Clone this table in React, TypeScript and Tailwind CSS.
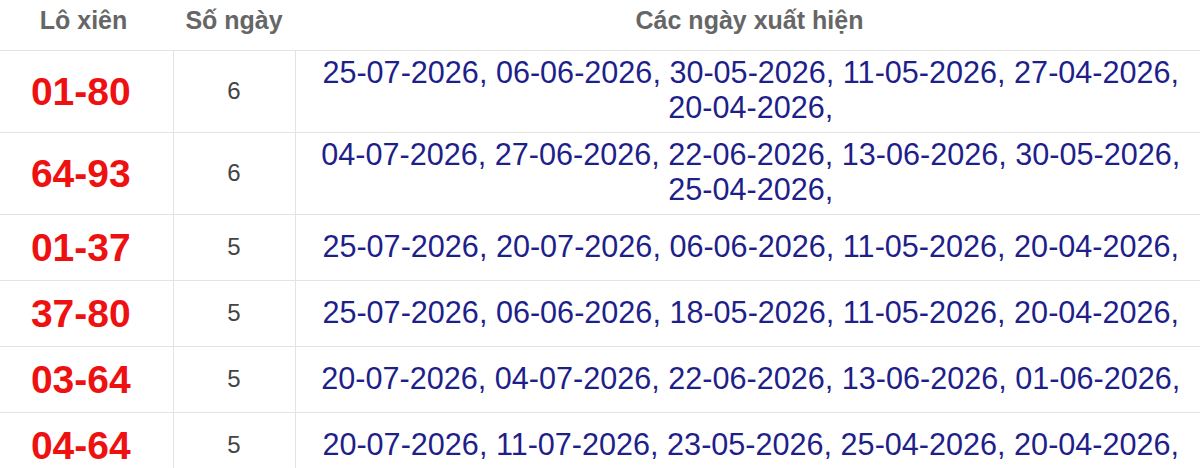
import React from 'react';

type Row = {
  pair: string;
  days: number;
  dates: string[];
  tall: boolean;
};

const rows: Row[] = [
  {
    pair: '01-80',
    days: 6,
    dates: ['25-07-2026', '06-06-2026', '30-05-2026', '11-05-2026', '27-04-2026', '20-04-2026'],
    tall: true,
  },
  {
    pair: '64-93',
    days: 6,
    dates: ['04-07-2026', '27-06-2026', '22-06-2026', '13-06-2026', '30-05-2026', '25-04-2026'],
    tall: true,
  },
  {
    pair: '01-37',
    days: 5,
    dates: ['25-07-2026', '20-07-2026', '06-06-2026', '11-05-2026', '20-04-2026'],
    tall: false,
  },
  {
    pair: '37-80',
    days: 5,
    dates: ['25-07-2026', '06-06-2026', '18-05-2026', '11-05-2026', '20-04-2026'],
    tall: false,
  },
  {
    pair: '03-64',
    days: 5,
    dates: ['20-07-2026', '04-07-2026', '22-06-2026', '13-06-2026', '01-06-2026'],
    tall: false,
  },
  {
    pair: '04-64',
    days: 5,
    dates: ['20-07-2026', '11-07-2026', '23-05-2026', '25-04-2026', '20-04-2026'],
    tall: false,
  },
];

export default function App() {
  return (
    <div className="w-[1200px] h-[468px] overflow-hidden bg-white font-['Liberation_Sans',Arial,sans-serif]">
      <table className="w-[1200px] border-collapse table-fixed">
        <colgroup>
          <col className="w-[173px]" />
          <col className="w-[122px]" />
          <col />
        </colgroup>
        <thead>
          <tr className="h-[50px] border-b border-[#e3e3e3]">
            <th className="text-[25px] font-bold text-[#666666] text-center align-middle pb-[8px] pr-[6px]">Lô xiên</th>
            <th className="text-[25px] font-bold text-[#666666] text-center align-middle pb-[8px]">Số ngày</th>
            <th className="text-[25px] font-bold text-[#666666] text-center align-middle pb-[8px] pl-[4px]">Các ngày xuất hiện</th>
          </tr>
        </thead>
        <tbody>
          {rows.map((row) => (
            <tr key={row.pair} className={`${row.tall ? 'h-[82px]' : 'h-[66px]'} border-b border-[#e3e3e3]`}>
              <td className="text-center align-middle text-[39px] font-bold text-[#ee1111] leading-none pr-[11px] border-r border-[#e3e3e3]">
                {row.pair}
              </td>
              <td className="text-center align-middle text-[24px] text-[#444444] leading-none border-r border-[#e3e3e3]">
                {row.days}
              </td>
              <td className="text-center align-middle text-[30.6px] text-[#1f1f8a] leading-[35px] pl-[21px] pr-[15px] pb-[2px]">
                {row.dates.map((d) => `${d}, `).join('')}
              </td>
            </tr>
          ))}
        </tbody>
      </table>
    </div>
  );
}
